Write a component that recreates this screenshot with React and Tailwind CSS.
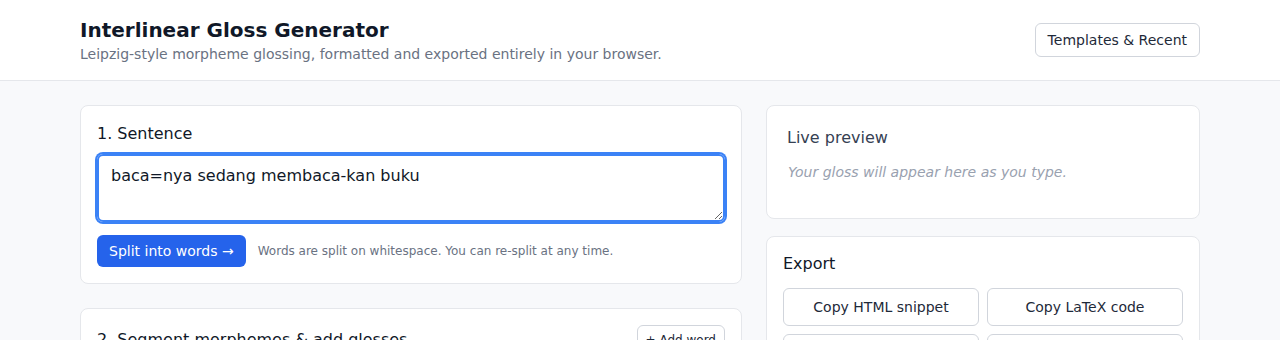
export default function App() {
  return (
    <div className="min-h-screen bg-[#f8f9fb] text-gray-900" style={{ fontFamily: '"DejaVu Sans", sans-serif' }}>
      <header className="bg-white border-b border-gray-200">
        <div className="mx-auto w-[1120px] py-4 flex items-center justify-between">
          <div>
            <h1 className="text-xl leading-7 font-bold text-gray-900">Interlinear Gloss Generator</h1>
            <p className="text-sm leading-5 text-gray-500">Leipzig-style morpheme glossing, formatted and exported entirely in your browser.</p>
          </div>
          <button className="px-3 py-1.5 text-sm leading-5 border border-gray-300 rounded-md bg-white text-gray-800">Templates &amp; Recent</button>
        </div>
      </header>
      <main className="mx-auto w-[1120px] pt-6 grid grid-cols-[1fr_434px] gap-6 items-start">
        <div className="flex flex-col gap-6">
          <section className="bg-white border border-gray-200 rounded-lg p-4">
            <h2 className="text-base leading-6 text-gray-900 mb-2">1. Sentence</h2>
            <textarea
              rows={2}
              defaultValue="baca=nya sedang membaca-kan buku"
              className="block w-full h-[68px] px-3 py-2 text-base leading-6 text-gray-900 border-2 border-[#3b82f6] rounded-md shadow-[0_0_0_2px_#3b82f6] outline-none resize-y"
            />
            <div className="mt-[13px] flex items-center gap-3">
              <button className="px-3 py-1.5 text-sm leading-5 bg-[#2563eb] text-white rounded-md">Split into words →</button>
              <span className="text-xs text-gray-500">Words are split on whitespace. You can re-split at any time.</span>
            </div>
          </section>
          <section className="bg-white border border-gray-200 rounded-lg p-4">
            <div className="flex items-center justify-between">
              <h2 className="text-base leading-6 text-gray-900">2. Segment morphemes &amp; add glosses</h2>
              <button className="px-2 py-1 text-xs leading-5 border border-gray-300 rounded-md bg-white text-gray-800">+ Add word</button>
            </div>
            <div className="h-40" />
          </section>
        </div>
        <div className="flex flex-col gap-[17px]">
          <section className="bg-white border border-gray-200 rounded-lg p-5">
            <h2 className="text-base leading-6 text-gray-700 mb-3">Live preview</h2>
            <div className="min-h-[36px]">
              <p className="text-sm leading-5 italic text-gray-400 pl-px">Your gloss will appear here as you type.</p>
            </div>
          </section>
          <section className="bg-white border border-gray-200 rounded-lg p-4">
            <h2 className="text-base leading-6 text-gray-900 mb-3 -mt-px">Export</h2>
            <div className="grid grid-cols-2 gap-2">
              <button className="py-2 text-sm leading-5 border border-gray-300 rounded-md bg-white text-gray-800">Copy HTML snippet</button>
              <button className="py-2 text-sm leading-5 border border-gray-300 rounded-md bg-white text-gray-800">Copy LaTeX code</button>
              <button className="py-2 text-sm leading-5 border border-gray-300 rounded-md bg-white text-gray-800">Download PNG</button>
              <button className="py-2 text-sm leading-5 border border-gray-300 rounded-md bg-white text-gray-800">Download SVG</button>
            </div>
          </section>
        </div>
      </main>
    </div>
  );
}
